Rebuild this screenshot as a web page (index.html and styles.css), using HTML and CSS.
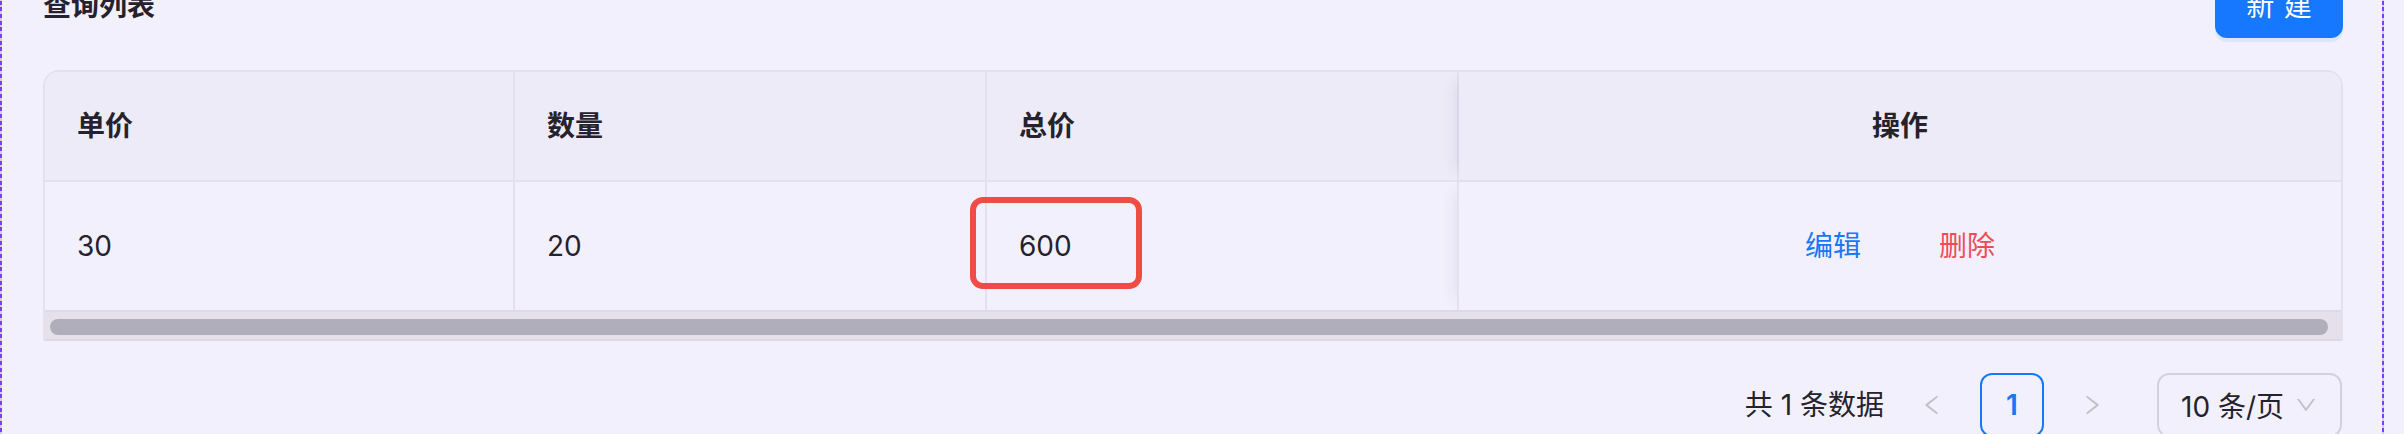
FILE: index.html
```html
<!DOCTYPE html>
<html lang="zh-CN">
<head>
<meta charset="utf-8">
<title>查询列表</title>
<link rel="stylesheet" href="styles.css">
</head>
<body>
<div class="frame">
  <div class="toolbar">
    <div class="title">查询列表</div>
    <button class="btn-primary" type="button"><span>新建</span></button>
  </div>

  <div class="table">
    <div class="row head">
      <div class="cell">单价</div>
      <div class="cell">数量</div>
      <div class="cell">总价</div>
      <div class="cell fixed">操作</div>
    </div>
    <div class="row body">
      <div class="cell">30</div>
      <div class="cell">20</div>
      <div class="cell mark-host">600<span class="mark"></span></div>
      <div class="cell fixed actions">
        <button class="link" type="button">编辑</button>
        <button class="link danger" type="button">删除</button>
      </div>
    </div>
    <div class="scroll"><div class="thumb"></div></div>
  </div>

  <div class="pager">
    <span class="total">共 1 条数据</span>
    <span class="nav">
      <svg viewBox="0 0 1024 1024" width="26" height="26"><path d="M724 218.3V141c0-6.7-7.7-10.4-12.9-6.3L260.3 486.8a31.86 31.86 0 000 50.3l450.8 352.1c5.3 4.1 12.9.4 12.9-6.3v-77.3c0-4.9-2.3-9.6-6.1-12.6l-360-281 360-281.1c3.8-3 6.1-7.7 6.1-12.6z"/></svg>
    </span>
    <span class="page active">1</span>
    <span class="nav next">
      <svg viewBox="0 0 1024 1024" width="26" height="26"><path d="M765.7 486.8L314.9 134.7A7.97 7.97 0 00302 141v77.3c0 4.9 2.3 9.6 6.1 12.6l360 281.1-360 281.1c-3.9 3-6.1 7.7-6.1 12.6V883c0 6.700 7.7 10.4 12.9 6.3l450.8-352.1a31.96 31.96 0 000-50.4z"/></svg>
    </span>
    <span class="size-select">
      <span>10 条/页</span>
      <svg viewBox="0 0 1024 1024" width="24" height="24"><path d="M884 256h-75c-5.1 0-9.9 2.5-12.9 6.6L512 654.2 227.9 262.6c-3-4.1-7.8-6.6-12.9-6.6h-75c-6.5 0-10.3 7.4-6.5 12.7l352.6 486.1c12.8 17.6 39 17.6 51.7 0l352.6-486.1c3.9-5.3.1-12.7-6.4-12.7z"/></svg>
    </span>
  </div>
</div>
</body>
</html>
```

FILE: styles.css
```css
html, body {
  margin: 0;
  height: 100%;
  overflow: hidden;
  background: #f3f0fd;
}

body {
  font-family: Inter, "Noto Sans CJK SC", sans-serif;
  font-size: 28px;
  color: #25222d;
}

.frame {
  width: 2384px;
  min-height: 540px;
  box-sizing: border-box;
  margin-top: -26px;
  padding: 0 41px 0 43px;
  background:
    repeating-linear-gradient(to bottom, #7b3ff5 0 4px, #d1ccdc 4px 6.67px) left top / 2px 100% no-repeat,
    repeating-linear-gradient(to bottom, #7b3ff5 0 4px, #d1ccdc 4px 6.67px) right top / 2px 100% no-repeat;
}

.toolbar {
  display: flex;
  justify-content: space-between;
  align-items: center;
  height: 64px;
}

.title {
  font-size: 28px;
  font-weight: 700;
  line-height: 44px;
}

.btn-primary {
  flex-shrink: 0;
  white-space: nowrap;
  width: 128px;
  height: 64px;
  padding: 0;
  border: 2px solid #1677ff;
  background: #1677ff;
  color: #fff;
  border-radius: 12px;
  box-shadow: 0 4px 0 rgba(5, 145, 255, 0.1);
  font: inherit;
  font-size: 28px;
  line-height: 44px;
}

.btn-primary span {
  letter-spacing: 0.34em;
  margin-right: -0.34em;
}

.table {
  margin-top: 32px;
  border: 2px solid #e4e0ee;
  border-bottom: none;
  border-radius: 16px 16px 0 0;
  overflow: hidden;
}

.row {
  display: grid;
  grid-template-columns: 470px 472px 472px 1fr;
}

.head {
  background: #eeebf8;
  border-bottom: 2px solid #e4e0ee;
}

.body {
  border-bottom: 2px solid #dedae8;
}

.cell {
  box-sizing: border-box;
  display: flex;
  align-items: center;
  padding: 0 32px;
  border-right: 2px solid #e4e0ee;
  line-height: 44px;
}

.head .cell {
  height: 108px;
  font-weight: 600;
}

.body .cell {
  height: 128px;
}

.cell.fixed {
  border-right: none;
  justify-content: center;
  box-shadow: -14px 0 14px -10px rgba(60, 40, 110, 0.09);
}

.mark-host {
  position: relative;
}

.mark {
  position: absolute;
  left: -17px;
  top: 15px;
  width: 172px;
  height: 92px;
  box-sizing: border-box;
  border: 6px solid #ef4c44;
  border-radius: 13px;
}

.actions {
  gap: 18px;
}

.link {
  white-space: nowrap;
  background: none;
  border: 0;
  padding: 0 30px;
  height: 64px;
  font: inherit;
  font-size: 28px;
  color: #1677ff;
}

.link.danger {
  color: #f24a5a;
}

.scroll {
  background: #e4e0ec;
  padding: 7px 13px 4px 5px;
  border-bottom: 2px solid #dcd8e6;
}

.thumb {
  height: 16px;
  border-radius: 8px;
  background: #b1aebb;
}

.pager {
  display: flex;
  justify-content: flex-end;
  align-items: center;
  margin-top: 32px;
  padding-right: 1px;
  height: 64px;
}

.total {
  margin-right: 16px;
  line-height: 64px;
  white-space: nowrap;
}

.nav {
  width: 64px;
  height: 64px;
  display: flex;
  align-items: center;
  justify-content: center;
  margin-right: 16px;
  fill: #c3c0ca;
}

.nav.next {
  margin-right: 33px;
}

.page {
  box-sizing: border-box;
  width: 64px;
  height: 64px;
  display: flex;
  align-items: center;
  justify-content: center;
  margin-right: 16px;
  border: 2px solid #1677ff;
  border-radius: 12px;
  color: #1677ff;
  font-weight: 600;
}

.size-select {
  box-sizing: border-box;
  width: 185px;
  height: 64px;
  display: flex;
  align-items: center;
  justify-content: space-between;
  padding: 0 22px;
  border: 2px solid #d5d1dc;
  border-radius: 12px;
  fill: #c3c0ca;
  white-space: nowrap;
}
```
